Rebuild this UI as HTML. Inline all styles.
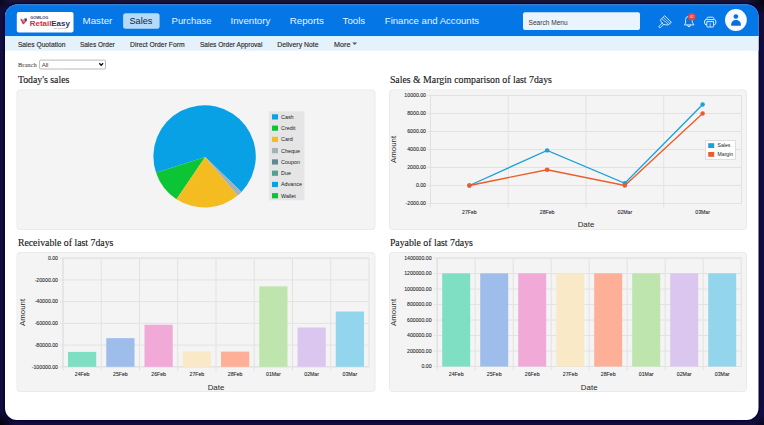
<!DOCTYPE html>
<html><head><meta charset="utf-8">
<style>
html,body{margin:0;padding:0;}
body{width:764px;height:425px;overflow:hidden;background:#110d3c;position:relative;font-family:"Liberation Sans",sans-serif;}
svg text{font-family:"Liberation Sans",sans-serif;}
.tk{font-size:5.2px;fill:#262626;stroke:#262626;stroke-width:0.08px;}
.lg{font-size:5.1px;fill:#222;}
.lg2{font-size:5.4px;fill:#222;}
.ax{font-size:7.9px;fill:#2a2a2a;}
.ttl{font-family:"Liberation Serif",serif !important;font-size:9.8px;fill:#151515;stroke:#151515;stroke-width:0.12px;}
.nv{font-size:9.8px;}
.lgs{font-size:3.8px;fill:#323a66;font-weight:bold;}
.lgb{font-size:8px;font-weight:bold;}
.lgt{font-size:1.6px;fill:#777;}
.srch{font-size:7.4px;fill:#333;}
.badge{font-size:3.4px;fill:#ffe8e8;}
.sn{font-size:8.1px;fill:#2a2a2a;stroke:#2a2a2a;stroke-width:0.15px;}
.br{font-family:"Liberation Serif",serif !important;font-size:6.5px;fill:#333;}
.sel{font-size:6.1px;fill:#444;}
</style></head><body>

<svg width="764" height="425" viewBox="0 0 764 425" style="position:absolute;left:0;top:0">
<defs><clipPath id="pc"><rect x="5" y="4.5" width="753.5" height="415.5" rx="12"/></clipPath><radialGradient id="vg"><stop offset="0" stop-color="#02020a" stop-opacity="1"/><stop offset="1" stop-color="#02020a" stop-opacity="0"/></radialGradient></defs>
<rect x="0" y="0" width="764" height="425" fill="#110d3c"/>
<rect x="0" y="0" width="764" height="2.5" fill="#191337"/>
<circle cx="764" cy="0" r="16" fill="url(#vg)"/>
<circle cx="0" cy="425" r="14" fill="url(#vg)"/>
<circle cx="0" cy="0" r="10" fill="url(#vg)" opacity="0.7"/>
<circle cx="764" cy="425" r="10" fill="url(#vg)" opacity="0.7"/>
<rect x="4.2" y="3.7" width="755.1" height="417.1" rx="12.8" fill="none" stroke="#05033a" stroke-width="1.6"/>
<g clip-path="url(#pc)"><rect x="0" y="0" width="764" height="425" fill="#ffffff"/><rect x="0" y="0" width="764" height="36" fill="#0576e6"/><rect x="0" y="4.5" width="764" height="1" fill="#1585ee"/><rect x="0" y="36" width="764" height="14.7" fill="#e5f1fb"/><rect x="0" y="36" width="764" height="1" fill="#cff5fd"/></g>
<rect x="17" y="90" width="358" height="139.5" rx="3" fill="#f4f4f4" stroke="#ebebeb" stroke-width="1"/>
<path d="M205.2,157.0 L241.43,191.97 A51.2,51.2 0 1 0 156.07,172.73 Z" fill="#09a1e5"/>
<path d="M205.2,157.0 L156.07,172.73 A51.2,51.2 0 0 0 176.49,199.19 Z" fill="#0bc535"/>
<path d="M205.2,157.0 L176.49,199.19 A51.2,51.2 0 0 0 237.51,195.62 Z" fill="#f5bc22"/>
<path d="M205.2,157.0 L237.51,195.62 A51.2,51.2 0 0 0 241.43,191.97 Z" fill="#a3b2b8"/>
<rect x="269" y="111.3" width="35.5" height="89" fill="#e5e5e5"/>
<rect x="272" y="114.30" width="6" height="5.2" fill="#09a1e5"/>
<text x="281" y="118.90" class="lg2">Cash</text>
<rect x="272" y="125.56" width="6" height="5.2" fill="#0bc535"/>
<text x="281" y="130.16" class="lg2">Credit</text>
<rect x="272" y="136.82" width="6" height="5.2" fill="#f5bc22"/>
<text x="281" y="141.42" class="lg2">Card</text>
<rect x="272" y="148.08" width="6" height="5.2" fill="#a3b2b8"/>
<text x="281" y="152.68" class="lg2">Cheque</text>
<rect x="272" y="159.34" width="6" height="5.2" fill="#5b8a92"/>
<text x="281" y="163.94" class="lg2">Coupon</text>
<rect x="272" y="170.60" width="6" height="5.2" fill="#52a08e"/>
<text x="281" y="175.20" class="lg2">Due</text>
<rect x="272" y="181.86" width="6" height="5.2" fill="#09a1e5"/>
<text x="281" y="186.46" class="lg2">Advance</text>
<rect x="272" y="193.12" width="6" height="5.2" fill="#0bc535"/>
<text x="281" y="197.72" class="lg2">Wallet</text>
<rect x="389.5" y="90" width="357.0" height="139.5" rx="3" fill="#f4f4f4" stroke="#ebebeb" stroke-width="1"/>
<rect x="430.5" y="95.5" width="311.0" height="108.0" fill="#f4f4f4" stroke="#e2e2e2" stroke-width="1"/>
<line x1="427.5" y1="203.50" x2="741.5" y2="203.50" stroke="#e2e2e2" stroke-width="1"/>
<text x="426" y="205.30" text-anchor="end" class="tk">-2000.00</text>
<line x1="427.5" y1="185.50" x2="741.5" y2="185.50" stroke="#e2e2e2" stroke-width="1"/>
<text x="426" y="187.30" text-anchor="end" class="tk">0.00</text>
<line x1="427.5" y1="167.50" x2="741.5" y2="167.50" stroke="#e2e2e2" stroke-width="1"/>
<text x="426" y="169.30" text-anchor="end" class="tk">2000.00</text>
<line x1="427.5" y1="149.50" x2="741.5" y2="149.50" stroke="#e2e2e2" stroke-width="1"/>
<text x="426" y="151.30" text-anchor="end" class="tk">4000.00</text>
<line x1="427.5" y1="131.50" x2="741.5" y2="131.50" stroke="#e2e2e2" stroke-width="1"/>
<text x="426" y="133.30" text-anchor="end" class="tk">6000.00</text>
<line x1="427.5" y1="113.50" x2="741.5" y2="113.50" stroke="#e2e2e2" stroke-width="1"/>
<text x="426" y="115.30" text-anchor="end" class="tk">8000.00</text>
<line x1="427.5" y1="95.50" x2="741.5" y2="95.50" stroke="#e2e2e2" stroke-width="1"/>
<text x="426" y="97.30" text-anchor="end" class="tk">10000.00</text>
<line x1="508.25" y1="95.5" x2="508.25" y2="207.5" stroke="#e2e2e2" stroke-width="1"/>
<line x1="586.00" y1="95.5" x2="586.00" y2="207.5" stroke="#e2e2e2" stroke-width="1"/>
<line x1="663.75" y1="95.5" x2="663.75" y2="207.5" stroke="#e2e2e2" stroke-width="1"/>
<line x1="430.5" y1="95.5" x2="430.5" y2="207.5" stroke="#e0e0e0" stroke-width="1"/>
<text x="469.38" y="214.20" text-anchor="middle" class="tk">27Feb</text>
<text x="547.12" y="214.20" text-anchor="middle" class="tk">28Feb</text>
<text x="624.88" y="214.20" text-anchor="middle" class="tk">02Mar</text>
<text x="702.62" y="214.20" text-anchor="middle" class="tk">03Mar</text>
<polyline points="469.38,185.50 547.12,150.40 624.88,183.25 702.62,104.50" fill="none" stroke="#1ba0d8" stroke-width="1.35"/>
<circle cx="469.38" cy="185.50" r="2.2" fill="#1ba0d8"/>
<circle cx="547.12" cy="150.40" r="2.2" fill="#1ba0d8"/>
<circle cx="624.88" cy="183.25" r="2.2" fill="#1ba0d8"/>
<circle cx="702.62" cy="104.50" r="2.2" fill="#1ba0d8"/>
<polyline points="469.38,185.50 547.12,169.75 624.88,185.50 702.62,113.50" fill="none" stroke="#ec5b2b" stroke-width="1.35"/>
<circle cx="469.38" cy="185.50" r="2.2" fill="#ec5b2b"/>
<circle cx="547.12" cy="169.75" r="2.2" fill="#ec5b2b"/>
<circle cx="624.88" cy="185.50" r="2.2" fill="#ec5b2b"/>
<circle cx="702.62" cy="113.50" r="2.2" fill="#ec5b2b"/>
<text x="586" y="227" text-anchor="middle" class="ax">Date</text>
<text transform="translate(396.2,149.50) rotate(-90)" text-anchor="middle" class="ax">Amount</text>
<rect x="705.5" y="140.5" width="30" height="19" fill="#ffffff" stroke="#d8d8d8" stroke-width="0.8"/>
<rect x="708.2" y="143.2" width="6" height="4.8" fill="#1ba0d8"/>
<rect x="708.2" y="152" width="6" height="4.8" fill="#ec5b2b"/>
<text x="717.6" y="146.9" class="lg">Sales</text>
<text x="717.6" y="156.1" class="lg">Margin</text>
<rect x="17" y="252.5" width="358" height="139.0" rx="3" fill="#f4f4f4" stroke="#ebebeb" stroke-width="1"/>
<rect x="63" y="258.2" width="306" height="108.60000000000002" fill="#f4f4f4" stroke="#e2e2e2" stroke-width="1"/>
<line x1="60" y1="366.80" x2="369" y2="366.80" stroke="#e2e2e2" stroke-width="1"/>
<text x="58" y="368.60" text-anchor="end" class="tk">-100000.00</text>
<line x1="60" y1="345.08" x2="369" y2="345.08" stroke="#e2e2e2" stroke-width="1"/>
<text x="58" y="346.88" text-anchor="end" class="tk">-80000.00</text>
<line x1="60" y1="323.36" x2="369" y2="323.36" stroke="#e2e2e2" stroke-width="1"/>
<text x="58" y="325.16" text-anchor="end" class="tk">-60000.00</text>
<line x1="60" y1="301.64" x2="369" y2="301.64" stroke="#e2e2e2" stroke-width="1"/>
<text x="58" y="303.44" text-anchor="end" class="tk">-40000.00</text>
<line x1="60" y1="279.92" x2="369" y2="279.92" stroke="#e2e2e2" stroke-width="1"/>
<text x="58" y="281.72" text-anchor="end" class="tk">-20000.00</text>
<line x1="60" y1="258.20" x2="369" y2="258.20" stroke="#e2e2e2" stroke-width="1"/>
<text x="58" y="260.00" text-anchor="end" class="tk">0.00</text>
<line x1="101.25" y1="258.2" x2="101.25" y2="370.8" stroke="#e2e2e2" stroke-width="1"/>
<line x1="139.50" y1="258.2" x2="139.50" y2="370.8" stroke="#e2e2e2" stroke-width="1"/>
<line x1="177.75" y1="258.2" x2="177.75" y2="370.8" stroke="#e2e2e2" stroke-width="1"/>
<line x1="216.00" y1="258.2" x2="216.00" y2="370.8" stroke="#e2e2e2" stroke-width="1"/>
<line x1="254.25" y1="258.2" x2="254.25" y2="370.8" stroke="#e2e2e2" stroke-width="1"/>
<line x1="292.50" y1="258.2" x2="292.50" y2="370.8" stroke="#e2e2e2" stroke-width="1"/>
<line x1="330.75" y1="258.2" x2="330.75" y2="370.8" stroke="#e2e2e2" stroke-width="1"/>
<line x1="63" y1="258.2" x2="63" y2="370.8" stroke="#e0e0e0" stroke-width="1"/>
<rect x="68.00" y="351.92" width="28.25" height="14.88" fill="#7edfc3"/>
<text x="82.12" y="376.40" text-anchor="middle" class="tk">24Feb</text>
<rect x="106.25" y="338.13" width="28.25" height="28.67" fill="#9fbdea"/>
<text x="120.38" y="376.40" text-anchor="middle" class="tk">25Feb</text>
<rect x="144.50" y="324.77" width="28.25" height="42.03" fill="#f1a9d8"/>
<text x="158.62" y="376.40" text-anchor="middle" class="tk">26Feb</text>
<rect x="182.75" y="351.38" width="28.25" height="15.42" fill="#f9e9c6"/>
<text x="196.88" y="376.40" text-anchor="middle" class="tk">27Feb</text>
<rect x="221.00" y="351.60" width="28.25" height="15.20" fill="#fdaf97"/>
<text x="235.12" y="376.40" text-anchor="middle" class="tk">28Feb</text>
<rect x="259.25" y="286.33" width="28.25" height="80.47" fill="#bde5ad"/>
<text x="273.38" y="376.40" text-anchor="middle" class="tk">01Mar</text>
<rect x="297.50" y="327.49" width="28.25" height="39.31" fill="#dbc6f0"/>
<text x="311.62" y="376.40" text-anchor="middle" class="tk">02Mar</text>
<rect x="335.75" y="311.52" width="28.25" height="55.28" fill="#93d5ec"/>
<text x="349.88" y="376.40" text-anchor="middle" class="tk">03Mar</text>
<text x="216" y="389.6" text-anchor="middle" class="ax">Date</text>
<text transform="translate(24.6,312.5) rotate(-90)" text-anchor="middle" class="ax">Amount</text>
<rect x="389.5" y="252.5" width="357.0" height="139.0" rx="3" fill="#f4f4f4" stroke="#ebebeb" stroke-width="1"/>
<rect x="437.2" y="258.1" width="304.00000000000006" height="108.39999999999998" fill="#f4f4f4" stroke="#e2e2e2" stroke-width="1"/>
<line x1="434.2" y1="366.50" x2="741.2" y2="366.50" stroke="#e2e2e2" stroke-width="1"/>
<text x="431.6" y="368.30" text-anchor="end" class="tk">0.00</text>
<line x1="434.2" y1="351.01" x2="741.2" y2="351.01" stroke="#e2e2e2" stroke-width="1"/>
<text x="431.6" y="352.81" text-anchor="end" class="tk">200000.00</text>
<line x1="434.2" y1="335.53" x2="741.2" y2="335.53" stroke="#e2e2e2" stroke-width="1"/>
<text x="431.6" y="337.33" text-anchor="end" class="tk">400000.00</text>
<line x1="434.2" y1="320.04" x2="741.2" y2="320.04" stroke="#e2e2e2" stroke-width="1"/>
<text x="431.6" y="321.84" text-anchor="end" class="tk">600000.00</text>
<line x1="434.2" y1="304.56" x2="741.2" y2="304.56" stroke="#e2e2e2" stroke-width="1"/>
<text x="431.6" y="306.36" text-anchor="end" class="tk">800000.00</text>
<line x1="434.2" y1="289.07" x2="741.2" y2="289.07" stroke="#e2e2e2" stroke-width="1"/>
<text x="431.6" y="290.87" text-anchor="end" class="tk">1000000.00</text>
<line x1="434.2" y1="273.59" x2="741.2" y2="273.59" stroke="#e2e2e2" stroke-width="1"/>
<text x="431.6" y="275.39" text-anchor="end" class="tk">1200000.00</text>
<line x1="434.2" y1="258.10" x2="741.2" y2="258.10" stroke="#e2e2e2" stroke-width="1"/>
<text x="431.6" y="259.90" text-anchor="end" class="tk">1400000.00</text>
<line x1="475.20" y1="258.1" x2="475.20" y2="370.5" stroke="#e2e2e2" stroke-width="1"/>
<line x1="513.20" y1="258.1" x2="513.20" y2="370.5" stroke="#e2e2e2" stroke-width="1"/>
<line x1="551.20" y1="258.1" x2="551.20" y2="370.5" stroke="#e2e2e2" stroke-width="1"/>
<line x1="589.20" y1="258.1" x2="589.20" y2="370.5" stroke="#e2e2e2" stroke-width="1"/>
<line x1="627.20" y1="258.1" x2="627.20" y2="370.5" stroke="#e2e2e2" stroke-width="1"/>
<line x1="665.20" y1="258.1" x2="665.20" y2="370.5" stroke="#e2e2e2" stroke-width="1"/>
<line x1="703.20" y1="258.1" x2="703.20" y2="370.5" stroke="#e2e2e2" stroke-width="1"/>
<line x1="437.2" y1="258.1" x2="437.2" y2="370.5" stroke="#e0e0e0" stroke-width="1"/>
<rect x="442.20" y="273.35" width="28.00" height="93.15" fill="#7edfc3"/>
<text x="456.20" y="376.10" text-anchor="middle" class="tk">24Feb</text>
<rect x="480.20" y="273.35" width="28.00" height="93.15" fill="#9fbdea"/>
<text x="494.20" y="376.10" text-anchor="middle" class="tk">25Feb</text>
<rect x="518.20" y="273.35" width="28.00" height="93.15" fill="#f1a9d8"/>
<text x="532.20" y="376.10" text-anchor="middle" class="tk">26Feb</text>
<rect x="556.20" y="273.35" width="28.00" height="93.15" fill="#f9e9c6"/>
<text x="570.20" y="376.10" text-anchor="middle" class="tk">27Feb</text>
<rect x="594.20" y="273.35" width="28.00" height="93.15" fill="#fdaf97"/>
<text x="608.20" y="376.10" text-anchor="middle" class="tk">28Feb</text>
<rect x="632.20" y="273.35" width="28.00" height="93.15" fill="#bde5ad"/>
<text x="646.20" y="376.10" text-anchor="middle" class="tk">01Mar</text>
<rect x="670.20" y="273.35" width="28.00" height="93.15" fill="#dbc6f0"/>
<text x="684.20" y="376.10" text-anchor="middle" class="tk">02Mar</text>
<rect x="708.20" y="273.35" width="28.00" height="93.15" fill="#93d5ec"/>
<text x="722.20" y="376.10" text-anchor="middle" class="tk">03Mar</text>
<text x="589.2" y="389.6" text-anchor="middle" class="ax">Date</text>
<text transform="translate(396.2,312.5) rotate(-90)" text-anchor="middle" class="ax">Amount</text>
<rect x="16.8" y="12.1" width="56.7" height="20.5" rx="2" fill="#ffffff"/>
<path d="M20.2,18.8 L21.6,18.8 L23.6,21.4 L25.2,20.2 L26,21.6 L23.8,24.2 L22.6,24 Z" fill="#e0344e"/>
<path d="M22.6,19.4 L24.4,19.2 L24.8,21.4 L23.2,22.6 Z" fill="#f07a98"/>
<path d="M24.2,18.4 L26.9,18.6 L26.6,21.4 L25,21 Z" fill="#2b2f6e"/>
<text x="30.2" y="19.3" class="lgs" textLength="18" lengthAdjust="spacingAndGlyphs">GOWLOG</text>
<text x="29.8" y="26.2" class="lgb" textLength="40" lengthAdjust="spacingAndGlyphs"><tspan fill="#e0283c">Retail</tspan><tspan fill="#2b2f72">Easy</tspan></text>
<text x="54" y="28.6" class="lgt">ERP SOFTWARE</text>
<rect x="123.1" y="13.3" width="36.5" height="15.4" rx="2.5" fill="#b5dbfa"/>
<text x="82.6" y="23.8" class="nv" fill="#eaf3ff" textLength="29.7" lengthAdjust="spacingAndGlyphs">Master</text>
<text x="129.5" y="23.8" class="nv" fill="#16243a" textLength="22.9" lengthAdjust="spacingAndGlyphs">Sales</text>
<text x="171.6" y="23.8" class="nv" fill="#eaf3ff" textLength="39.8" lengthAdjust="spacingAndGlyphs">Purchase</text>
<text x="230.5" y="23.8" class="nv" fill="#eaf3ff" textLength="39.8" lengthAdjust="spacingAndGlyphs">Inventory</text>
<text x="289.7" y="23.8" class="nv" fill="#eaf3ff" textLength="34.2" lengthAdjust="spacingAndGlyphs">Reports</text>
<text x="342.6" y="23.8" class="nv" fill="#eaf3ff" textLength="22.6" lengthAdjust="spacingAndGlyphs">Tools</text>
<text x="384.8" y="23.8" class="nv" fill="#eaf3ff" textLength="94.3" lengthAdjust="spacingAndGlyphs">Finance and Accounts</text>
<rect x="523" y="12.3" width="117" height="17.8" rx="2" fill="#e9f4fe"/>
<text x="528.6" y="24.5" class="srch" textLength="39" lengthAdjust="spacingAndGlyphs">Search Menu</text>
<g fill="none" stroke="#d4ebff" stroke-width="0.95" stroke-linejoin="round" stroke-linecap="round"><path d="M665,16 L671.4,22.3 L667.9,25.1 L663.2,24.4 L660.4,20.5 Z"/><path d="M663.6,17.6 L670,23.5 M662.1,19 L668.6,24.6" stroke-width="0.75"/><path d="M663.6,24.5 L660.6,27.4 A0.95,0.95 0 0 1 659.2,26 L662.2,23.1"/></g>
<g fill="none" stroke="#d4ebff" stroke-width="1" stroke-linejoin="round" stroke-linecap="round"><path d="M684.6,24.6 L685.6,23 L685.6,19.6 A3.2,3.2 0 0 1 692.2,19.6 L692.4,22.6 L693.8,24.6 Z"/><path d="M687.6,25.4 A1.4,1.4 0 0 0 690.4,25.4"/></g>
<circle cx="691.8" cy="16.8" r="3.8" fill="#e8453c"/>
<text x="691.8" y="18.0" text-anchor="middle" class="badge">02</text>
<g fill="none" stroke="#d4ebff" stroke-width="1" stroke-linejoin="round"><path d="M706.8,19.6 L706.8,18.4 A1.4,1.4 0 0 1 708.2,17.2 L712.4,17.2 A1.4,1.4 0 0 1 713.8,18.4 L713.8,19.6"/><path d="M706.8,24.6 L706,24.6 A1.4,1.4 0 0 1 704.6,23.2 L704.6,21 A1.6,1.6 0 0 1 706.2,19.6 L714.2,19.6 A1.6,1.6 0 0 1 715.8,21 L715.8,23.2 A1.4,1.4 0 0 1 714.4,24.6 L713.6,24.6"/><path d="M706.8,21.6 L713.6,21.6 L713.6,26.4 A0.6,0.6 0 0 1 713,27 L707.4,27 A0.6,0.6 0 0 1 706.8,26.4 Z"/><path d="M710.2,23.2 L710.2,26.6" stroke-width="0.8"/></g>
<circle cx="735.9" cy="20" r="10.9" fill="#f7fbff"/>
<circle cx="735.9" cy="16.5" r="2.3" fill="#0a6fdc"/>
<path d="M731.2,25.8 L731.2,24.2 C731.2,21.6 733.2,19.9 735.9,19.9 C738.6,19.9 740.8,21.6 740.8,24.2 L740.8,25.8 Z" fill="#0a6fdc"/>
<text x="17.9" y="46.6" class="sn" textLength="47.5" lengthAdjust="spacingAndGlyphs">Sales Quotation</text>
<text x="79.9" y="46.6" class="sn" textLength="34.8" lengthAdjust="spacingAndGlyphs">Sales Order</text>
<text x="130" y="46.6" class="sn" textLength="54.6" lengthAdjust="spacingAndGlyphs">Direct Order Form</text>
<text x="199.9" y="46.6" class="sn" textLength="62.6" lengthAdjust="spacingAndGlyphs">Sales Order Approval</text>
<text x="277.3" y="46.6" class="sn" textLength="41.2" lengthAdjust="spacingAndGlyphs">Delivery Note</text>
<text x="334" y="46.6" class="sn" textLength="16.4" lengthAdjust="spacingAndGlyphs">More</text>
<path d="M352.3,42.5 L357.1,42.5 L354.7,45.1 Z" fill="#555"/>
<text x="17.9" y="67" class="br">Branch</text>
<rect x="39.6" y="60.1" width="65.9" height="8.9" rx="1" fill="#fff" stroke="#a8a8a8" stroke-width="0.8"/>
<text x="41.7" y="66.8" class="sel">All</text>
<path d="M99.3,63.2 L101.2,65.2 L103.1,63.2" fill="none" stroke="#111" stroke-width="1.3"/>
<text x="17.9" y="82.7" class="ttl">Today&#39;s sales</text>
<text x="389.9" y="83.3" class="ttl">Sales &amp; Margin comparison of last 7days</text>
<text x="17.9" y="245.8" class="ttl">Receivable of last 7days</text>
<text x="389.9" y="245.8" class="ttl">Payable of last 7days</text>
</svg>
</body></html>
